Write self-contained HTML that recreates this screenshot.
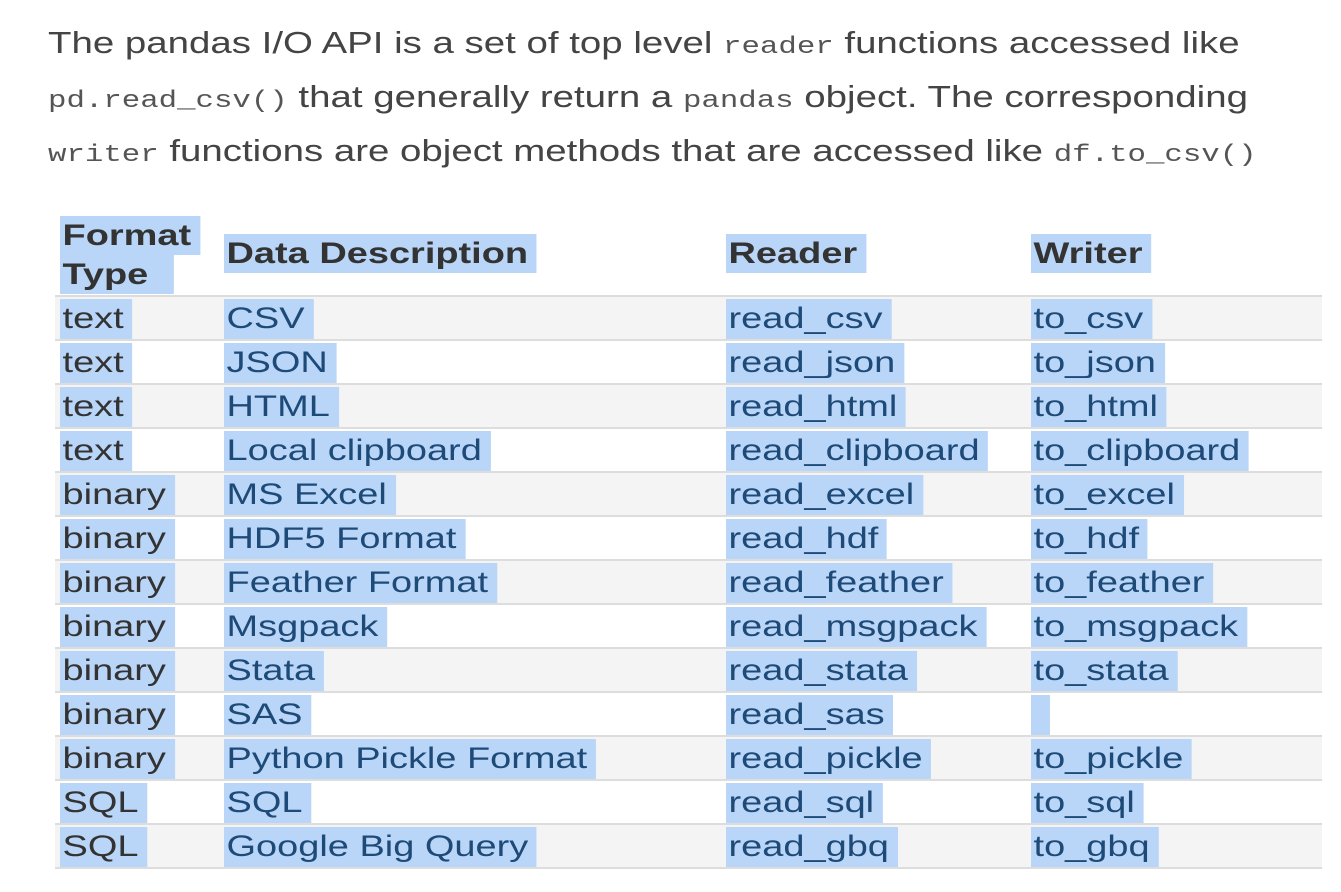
<!DOCTYPE html>
<html><head><meta charset="utf-8"><style>
body{margin:0;width:1341px;height:892px;background:#fff;overflow:hidden;font-family:"Liberation Sans",sans-serif;position:relative}
.p{position:absolute;left:48px;font-size:30.5px;color:#444;white-space:nowrap;line-height:53px;transform:scaleX(1.26);transform-origin:0 0}
.m{font-family:"Liberation Mono",monospace;font-size:24.4px;color:#555}
.row{position:absolute;left:55px;width:1267px;height:44px;border-top:2px solid #ddd;box-sizing:border-box}
.g{background:#f4f4f4}
.c{position:absolute;top:2px;height:40px;line-height:40px;font-size:30px;background:#b9d5f7;padding:0 7px 0 2px;color:#1e4a78;white-space:nowrap;transform:scaleX(1.265);transform-origin:0 0}
.c1{left:5px;color:#333}.c2{left:169px}.c3{left:671px}.c4{left:976px}
.h{position:absolute;font-size:30px;font-weight:bold;color:#333;background:#b9d5f7;padding:0 7px 0 2px;line-height:39px;height:39px;transform:scaleX(1.265);transform-origin:0 0}
</style></head><body>
<div class="p" style="top:17px">The pandas I/O API is a set of top level <span class="m">reader</span> functions accessed like</div>
<div class="p" style="top:71px"><span class="m">pd.read_csv()</span> that generally return a <span class="m">pandas</span> object. The corresponding</div>
<div class="p" style="top:125px"><span class="m">writer</span> functions are object methods that are accessed like <span class="m">df.to_csv()</span></div>
<div class="h" style="left:60px;top:216px;">Format</div>
<div class="h" style="left:60px;top:255px;padding-right:20px">Type</div>
<div class="h" style="left:224px;top:234px">Data Description</div>
<div class="h" style="left:726px;top:234px">Reader</div>
<div class="h" style="left:1031px;top:234px">Writer</div>
<div id="t"></div>
<script>
var d=[["text","CSV","read_csv","to_csv"],["text","JSON","read_json","to_json"],["text","HTML","read_html","to_html"],["text","Local clipboard","read_clipboard","to_clipboard"],["binary","MS Excel","read_excel","to_excel"],["binary","HDF5 Format","read_hdf","to_hdf"],["binary","Feather Format","read_feather","to_feather"],["binary","Msgpack","read_msgpack","to_msgpack"],["binary","Stata","read_stata","to_stata"],["binary","SAS","read_sas",""],["binary","Python Pickle Format","read_pickle","to_pickle"],["SQL","SQL","read_sql","to_sql"],["SQL","Google Big Query","read_gbq","to_gbq"]];
var h="";d.forEach(function(r,i){h+='<div class="row'+(i%2==0?' g':'')+'" style="top:'+(295+i*44)+'px">';
r.forEach(function(c,j){h+='<span class="c c'+(j+1)+'"'+(c==""?' style="width:6px"':'')+'>'+c+'</span>'});h+='</div>'});
h+='<div class="row" style="top:867px;height:2px"></div>';
document.getElementById("t").innerHTML=h;
</script>
</body></html>
